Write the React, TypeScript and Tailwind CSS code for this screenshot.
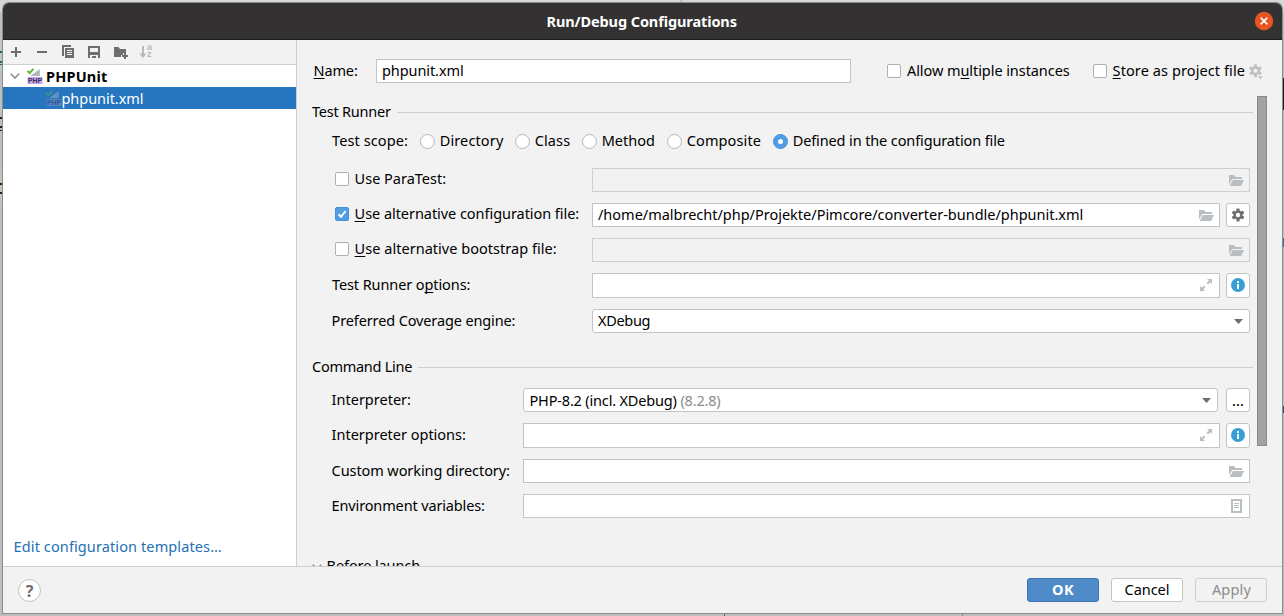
import type { ReactNode } from "react";

function Label({ children, className = "" }: { children: ReactNode; className?: string }) {
  return <span className={`block shrink-0 whitespace-pre leading-[18px] ${className}`}>{children}</span>;
}

function Mnemonic({ children }: { children: ReactNode }) {
  return (
    <span className="underline decoration-1 underline-offset-[2px] [text-decoration-skip-ink:none]">{children}</span>
  );
}

function Checkbox({ checked = false, className = "" }: { checked?: boolean; className?: string }) {
  return (
    <span
      className={`block size-[14px] shrink-0 rounded-[2px] border ${
        checked ? "border-[#4290dc] bg-[#4f9ee3]" : "border-[#b0b0b0] bg-white"
      } ${className}`}
    >
      {checked && (
        <svg viewBox="0 0 12 12" className="size-3" fill="none" stroke="white" strokeWidth="2">
          <path d="M2.6 6.2 5 8.8 9.6 3" />
        </svg>
      )}
    </span>
  );
}

function Radio({ label, checked = false, className = "" }: { label: string; checked?: boolean; className?: string }) {
  return (
    <div className={`flex shrink-0 items-start ${className}`}>
      <span
        className={`mt-[3px] mr-[4.7px] flex size-[15px] items-center justify-center rounded-full border ${
          checked ? "border-[#4290dc] bg-[#4f9ee3]" : "border-[#b4b4b4] bg-white"
        }`}
      >
        {checked && <span className="size-[5px] rounded-full bg-white" />}
      </span>
      <Label>{label}</Label>
    </div>
  );
}

function FolderOpen() {
  return (
    <svg width="15" height="11" viewBox="0 0 15 11" fill="#b9bec2" className="shrink-0">
      <path d="M0 0H5L6.5 2H13V4H3.3L0 9.5Z" />
      <path d="M3.8 5H15L12.2 11H.6Z" />
    </svg>
  );
}

function Expand() {
  return (
    <svg width="12" height="12" viewBox="0 0 12 12" fill="#b9bec2" className="shrink-0">
      <path d="M7 0h5v5l-1.7-1.7L8 5.6 6.6 4.1l2.2-2.3ZM0 7l1.7 1.7L4 6.4l1.4 1.5-2.2 2.3L5 12H0Z" />
    </svg>
  );
}

function ListIcon() {
  return (
    <svg width="11" height="14" viewBox="0 0 11 14" className="shrink-0">
      <path fill="#b9bec2" fillRule="evenodd" d="M0 0H11V14H0ZM2 2V12H9V2Z" />
      <path fill="#b9bec2" d="M3 4h5v1H3zM3 6h5v1H3zM3 8h5v1H3z" />
    </svg>
  );
}

function Arrow() {
  return (
    <svg width="9" height="5" viewBox="0 0 9 5" className="shrink-0">
      <path fill="#6e6e6e" d="M0 0H9L4.5 5Z" />
    </svg>
  );
}

function Gear({ color, className = "" }: { color: string; className?: string }) {
  return (
    <svg width="14" height="14" viewBox="0 0 14 14" className={`shrink-0 ${className}`}>
      <g fill={color}>
        <rect x="5.4" y=".6" width="3.2" height="12.8" />
        <rect x="5.4" y=".6" width="3.2" height="12.8" transform="rotate(60 7 7)" />
        <rect x="5.4" y=".6" width="3.2" height="12.8" transform="rotate(120 7 7)" />
      </g>
      <circle cx="7" cy="7" r="3.4" fill="none" stroke={color} strokeWidth="2.4" />
      <circle cx="7" cy="7" r="2.2" fill="white" />
    </svg>
  );
}

function Info() {
  return (
    <svg width="14" height="14" viewBox="0 0 14 14">
      <circle cx="7" cy="7" r="7" fill="#389fd6" />
      <path fill="white" d="M6 3h2v2H6zM6 6h2v5H6z" />
    </svg>
  );
}

function Chevron() {
  return (
    <svg width="10" height="6" viewBox="0 0 10 6" fill="none" stroke="#7f8487" strokeWidth="1.4" className="shrink-0">
      <path d="M.8.8 5 5 9.2.8" />
    </svg>
  );
}

function PhpIcon({ dim = false }: { dim?: boolean }) {
  return (
    <svg width="16" height="16" viewBox="0 0 16 16" className={`shrink-0 ${dim ? "opacity-45" : ""}`}>
      <path d="M12.8 1V8H3.2L6 6Z" fill="#aeb7bd" />
      <path d="M.5 2.8 2.7 5 6.4.9" fill="none" stroke="#5db53c" strokeWidth="1.9" />
      <rect x=".5" y="9" width="15" height="7" fill={dim ? "#8c9ac8" : "#c4a9f2"} />
      <text x="1" y="15" fontSize="7" fontWeight="700" fontFamily="Liberation Sans, sans-serif" textLength="14" lengthAdjust="spacingAndGlyphs" fill="#3d2f58">
        PHP
      </text>
    </svg>
  );
}

function Field({
  children,
  icon,
  disabled = false,
  rounded = false,
  className = "",
}: {
  children?: ReactNode;
  icon?: ReactNode;
  disabled?: boolean;
  rounded?: boolean;
  className?: string;
}) {
  return (
    <div
      className={`flex min-w-0 flex-1 items-start justify-between border ${
        disabled ? "border-[#cfcfcf]" : "border-[#c4c4c4] bg-white"
      } ${rounded ? "rounded-[3px]" : ""} ${className}`}
    >
      <div className="flex pl-[5px] pt-px">{children}</div>
      {icon}
    </div>
  );
}

function SideButton({ children, className = "ml-1.5" }: { children: ReactNode; className?: string }) {
  return (
    <button className={`flex w-6 shrink-0 items-center justify-center rounded-[3px] border border-[#c4c4c4] bg-white ${className}`}>
      {children}
    </button>
  );
}

function Section({ title, className = "" }: { title: ReactNode; className?: string }) {
  return (
    <div className={`flex items-start ${className}`}>
      {title}
      <div className="mt-[10px] h-px flex-1 bg-[#cfcfcf]" />
    </div>
  );
}

function Toolbar() {
  return (
    <div className="flex h-[25px] shrink-0 items-start border-b border-[#cfcfcf] bg-[#f2f2f2] pt-1 pl-[5px]">
      <svg width="16" height="16" viewBox="0 0 16 16" className="mr-[10px]" fill="#6e6e6e">
        <path d="M3 7h4V3h2v4h4v2H9v4H7V9H3z" />
      </svg>
      <svg width="16" height="16" viewBox="0 0 16 16" className="mr-[10px]" fill="#6e6e6e">
        <path d="M3 7h10v2H3z" />
      </svg>
      <svg width="16" height="16" viewBox="0 0 16 16" className="mr-[10px]" fill="#6e6e6e">
        <path d="M2 1h9v2H4v9H2z" />
        <path fillRule="evenodd" d="M5 4h9v10H5zM7 6v1h5v-1zM7 8v1h5v-1zM7 10v1h5v-1z" />
      </svg>
      <svg width="16" height="16" viewBox="0 0 16 16" className="mr-[10px]" fill="#6e6e6e">
        <path fillRule="evenodd" d="M2 2h12v12h-2v-3H4V14H2zM4 4v4h8V4z" />
        <path d="M6 12h4v2H6z" />
      </svg>
      <svg width="16" height="16" viewBox="0 0 16 16" className="mr-[10px]" fill="#6e6e6e">
        <path d="M2 3h4.5L8 5h6v4h-3v2H9v2H2z" />
        <path d="M12 9h2v2h2v2h-2v2h-2v-2h-2v-2h2z" />
      </svg>
      <div className="flex text-[#b9b9b9]">
        <svg width="9" height="16" viewBox="0 0 9 16" fill="#b9b9b9">
          <path d="M4 2h2v7.5h2.4L5 14 1.4 9.5H4z" />
        </svg>
        <span className="flex flex-col font-['Liberation_Sans',sans-serif] text-[9px] leading-[7px] font-bold">
          <span>a</span>
          <span>z</span>
        </span>
      </div>
    </div>
  );
}

function Sidebar() {
  return (
    <aside className="flex w-[294px] shrink-0 flex-col border-r border-[#cfcfcf] bg-white">
      <Toolbar />
      <div className="flex h-[22px] items-start pl-[6.5px] text-black">
        <span className="mt-[8px] mr-[7.5px]"><Chevron /></span>
        <span className="mt-[3px] mr-[3px]"><PhpIcon /></span>
        <Label className="mt-[2px] font-bold tracking-[0.2px]">PHPUnit</Label>
      </div>
      <div className="flex h-[22px] items-start bg-[#2675bf] pl-[42.5px] text-white">
        <span className="mt-[3px]"><PhpIcon dim /></span>
        <Label className="mt-[2px] tracking-[-0.05px]">phpunit.xml</Label>
      </div>
      <a className="mt-auto mb-[11px] pl-[10.6px] text-[#2470b3]">
        <Label className="tracking-[0.11px]">Edit configuration templates…</Label>
      </a>
    </aside>
  );
}

function MainPane() {
  return (
    <main className="flex min-w-0 flex-1 flex-col">
      <div className="flex h-14 shrink-0 items-start pt-[19px] pl-[16.6px]">
        <Label className="mt-[2px] w-[62.4px] tracking-[-0.15px]"><Mnemonic>N</Mnemonic>ame:</Label>
        <Field className="h-6 max-w-[475px]"><Label className="tracking-[-0.08px]">phpunit.xml</Label></Field>
        <Checkbox className="mt-[5px] ml-9" />
        <Label className="mt-[2px] ml-[6px] w-[186px] tracking-[-0.07px]">Allow m<Mnemonic>u</Mnemonic>ltiple instances</Label>
        <Checkbox className="mt-[5px]" />
        <Label className="mt-[2px] ml-[5.6px] w-[136.4px] tracking-[0.1px]"><Mnemonic>S</Mnemonic>tore as project file</Label>
        <svg width="15" height="16" viewBox="0 0 15 16" className="mt-[5px]" fill="#c0c0c0">
          <rect x="5" y=".4" width="3" height="12.8" />
          <rect x="5" y=".4" width="3" height="12.8" transform="rotate(60 6.5 6.8)" />
          <rect x="5" y=".4" width="3" height="12.8" transform="rotate(120 6.5 6.8)" />
          <circle cx="6.5" cy="6.8" r="4.6" />
          <circle cx="6.5" cy="6.8" r="2.1" fill="#f2f2f2" />
          <path d="M7.5 11.2H15L11.2 15.4Z" fill="#f2f2f2" />
          <path d="M8.8 12.2H14L11.4 15Z" />
        </svg>
      </div>
      <div className="flex min-h-0 flex-1 overflow-hidden">
        <div className="flex w-[956px] shrink-0 flex-col pt-[6px] pl-[15px]">
          <Section title={<Label className="w-[85px] tracking-[-0.22px]">Test Runner</Label>} />
          <div className="mt-[11px] flex items-start pl-5">
            <Label className="w-[88px] tracking-[0.1px]">Test scope:</Label>
            <Radio label="Directory" className="w-[95px] tracking-[0.13px]" />
            <Radio label="Class" className="w-[67px] tracking-[0.13px]" />
            <Radio label="Method" className="w-[85px]" />
            <Radio label="Composite" className="w-[106px] tracking-[0.13px]" />
            <Radio label="Defined in the configuration file" checked className="tracking-[-0.12px]" />
          </div>
          <div className="mt-[9px] ml-5 h-px bg-[#cfcfcf]" />
          <div className="mt-[10px] flex flex-col gap-[11px] pr-[3px] pl-[19px]">
            <div className="flex h-6 items-start">
              <Checkbox className="mt-[4px] ml-1" />
              <Label className="mt-px ml-[5.6px] w-[237.4px]">Use ParaTest:</Label>
              <Field disabled className="h-6 pr-[5px]" icon={<span className="mt-[6px]"><FolderOpen /></span>} />
            </div>
            <div className="flex h-6 items-start">
              <Checkbox checked className="mt-[4px] ml-1" />
              <Label className="mt-px ml-[5.6px] w-[237.4px] tracking-[-0.05px]"><Mnemonic>U</Mnemonic>se alternative configuration file:</Label>
              <Field className="h-6 pr-[5px]" icon={<span className="mt-[6px]"><FolderOpen /></span>}>
                <Label className="tracking-[-0.01px]">/home/malbrecht/php/Projekte/Pimcore/converter-bundle/phpunit.xml</Label>
              </Field>
              <SideButton className="ml-1.5 h-6"><Gear color="#6e6e6e" /></SideButton>
            </div>
            <div className="flex h-6 items-start">
              <Checkbox className="mt-[4px] ml-1" />
              <Label className="mt-px ml-[5.6px] w-[237.4px] tracking-[0.03px]"><Mnemonic>U</Mnemonic>se alternative bootstrap file:</Label>
              <Field disabled className="h-6 pr-[5px]" icon={<span className="mt-[6px]"><FolderOpen /></span>} />
            </div>
            <div className="flex h-[25px] items-start">
              <Label className="mt-[2px] ml-px w-[260px] tracking-[-0.1px]">Test Runner o<Mnemonic>p</Mnemonic>tions:</Label>
              <Field className="h-[25px] pr-[7px]" icon={<span className="mt-[5px]"><Expand /></span>} />
              <SideButton className="ml-1.5 h-[25px] pb-px"><Info /></SideButton>
            </div>
            <div className="flex h-6 items-start">
              <Label className="mt-[2px] ml-[.6px] w-[260.4px] tracking-[-0.13px]">Preferred Coverage engine:</Label>
              <Field rounded className="h-6 pr-[6px]" icon={<span className="mt-[9px]"><Arrow /></span>}>
                <Label className="tracking-[-0.3px]">XDebug</Label>
              </Field>
            </div>
          </div>
          <Section className="mt-6" title={<Label className="w-[106px] tracking-[-0.27px]">Command Line</Label>} />
          <div className="mt-[13px] flex flex-col gap-[11px] pr-[3px] pl-[19.6px]">
            <div className="flex h-6 items-start">
              <Label className="mt-[2px] w-[191.4px]">Interpreter:</Label>
              <Field rounded className="h-6 pr-[6px]" icon={<span className="mt-[9px]"><Arrow /></span>}>
                <Label className="mt-px ml-[.5px] tracking-[-0.17px]">PHP-8.2 (incl. XDebug) <span className="text-[#8c8c8c]">(8.2.8)</span></Label>
              </Field>
              <SideButton className="ml-2 h-6 pb-px"><span className="leading-[18px] font-medium">...</span></SideButton>
            </div>
            <div className="flex h-[25px] items-start">
              <Label className="mt-[2px] w-[191.4px] tracking-[-0.01px]">Interpreter options:</Label>
              <Field className="h-[25px] pr-[7px]" icon={<span className="mt-[5px]"><Expand /></span>} />
              <SideButton className="ml-1.5 h-[25px] pb-px"><Info /></SideButton>
            </div>
            <div className="flex h-6 items-start">
              <Label className="mt-[2px] w-[191.4px] tracking-[-0.09px]">Custom working directory:</Label>
              <Field className="h-6 pr-[5px]" icon={<span className="mt-[6px]"><FolderOpen /></span>} />
            </div>
            <div className="flex h-6 items-start">
              <Label className="mt-[2px] w-[191.4px] tracking-[-0.14px]">Environment variables:</Label>
              <Field className="h-6 pr-[7px]" icon={<span className="mt-[4px]"><ListIcon /></span>} />
            </div>
          </div>
          <div className="mt-[38px] flex items-start">
            <span className="mt-[8px] mr-[4.6px]"><Chevron /></span>
            <Label className="tracking-[-0.1px]">Before launch</Label>
          </div>
        </div>
        <div className="ml-1 h-[350px] w-[10px] shrink-0 border border-[#8c8c8c] bg-[#a3a3a3]" />
      </div>
    </main>
  );
}

function Backdrop() {
  return (
    <>
      <div className="absolute top-0 left-[680px] h-[2px] w-[2px] bg-[#bcbcbc]" />
      <div className="absolute top-[38px] left-0 h-[33px] w-[2px] bg-[#bcc8bf]" />
      <div className="absolute top-[51px] left-0 h-[2px] w-[2px] bg-[#1f6675]" />
      <div className="absolute top-[61px] left-0 h-[2px] w-[2px] bg-[#1f6675]" />
      <div className="absolute top-[64px] left-0 h-px w-[2px] bg-[#1f6675]" />
      <div className="absolute top-[117px] left-0 h-[2px] w-[2px] bg-[#222]" />
      <div className="absolute top-[126px] left-0 h-[2px] w-[2px] bg-[#222]" />
      <div className="absolute top-[130px] left-0 h-px w-[2px] bg-[#222]" />
      <div className="absolute top-[171px] left-0 h-8 w-[2px] bg-[#c8c3b5]" />
      <div className="absolute top-[183px] left-0 h-[2px] w-[2px] bg-[#222]" />
      <div className="absolute top-[192px] left-0 h-[2px] w-[2px] bg-[#222]" />
      <div className="absolute top-[78px] right-0 h-8 w-[2px] bg-[#1f1f1f]" />
      <div className="absolute top-[238px] right-0 h-[9px] w-px bg-[#3873ad]" />
      <div className="absolute top-[406px] right-0 h-[7px] w-px bg-[#2d4c78]" />
      <div className="absolute bottom-0 left-[724px] h-[2px] w-px bg-[#666]" />
      <div className="absolute bottom-0 left-[962px] h-[2px] w-px bg-[#858585]" />
    </>
  );
}

export default function App() {
  return (
    <div className="relative h-[616px] w-[1284px] overflow-hidden bg-[#bfbfbf] pt-[3px] pl-[3px] font-['Noto_Sans',sans-serif] text-[14.5px] text-black">
      <div className="absolute inset-x-0 top-0 h-[12px] bg-[#d6d6d6]" />
      <Backdrop />
      <div className="relative flex h-[610px] w-[1279px] flex-col rounded-t-[6px] bg-[#f2f2f2] shadow-[0_0_0_1px_#8b8b8b]">
        <header className="flex h-[37px] shrink-0 items-start rounded-t-[6px] border-b border-[#1d1d1d] bg-[#333132] text-white">
          <Label className="mt-[9px] ml-[543.5px] w-[707.5px] font-bold tracking-[-0.1px]">Run/Debug Configurations</Label>
          <svg width="20" height="20" viewBox="0 0 20 20" className="mt-[8px]">
            <circle cx="10" cy="10" r="9.2" fill="#e95420" />
            <path d="M6.6 6.6l6.8 6.8M13.4 6.6l-6.8 6.8" stroke="white" strokeWidth="1.6" />
          </svg>
        </header>
        <div className="flex h-[526px] shrink-0 overflow-hidden">
          <Sidebar />
          <MainPane />
        </div>
        <footer className="flex flex-1 items-start border-t border-[#cfcfcf] pt-[11px] pr-[15px] pl-[15px]">
          <button className="mt-px mr-auto flex size-[23px] items-center justify-center rounded-full border border-[#c0c0c0] bg-white text-[16px] leading-none font-bold text-[#6e6e6e]">
            ?
          </button>
          <button className="flex h-6 w-[72px] justify-center rounded-[3px] border border-[#3d75b3] bg-[#4f8bc9] pt-px text-white">
            <Label className="font-bold tracking-[0.5px]">OK</Label>
          </button>
          <button className="ml-3 flex h-6 w-[72px] justify-center rounded-[3px] border border-[#c4c4c4] bg-white pt-px">
            <Label className="tracking-[-0.05px]">Cancel</Label>
          </button>
          <button className="ml-3 flex h-6 w-[72px] justify-center rounded-[3px] border border-[#cfcfcf] pt-px text-[#8c8c8c]">
            <Label className="ml-px tracking-[0.2px]">Apply</Label>
          </button>
        </footer>
      </div>
    </div>
  );
}
